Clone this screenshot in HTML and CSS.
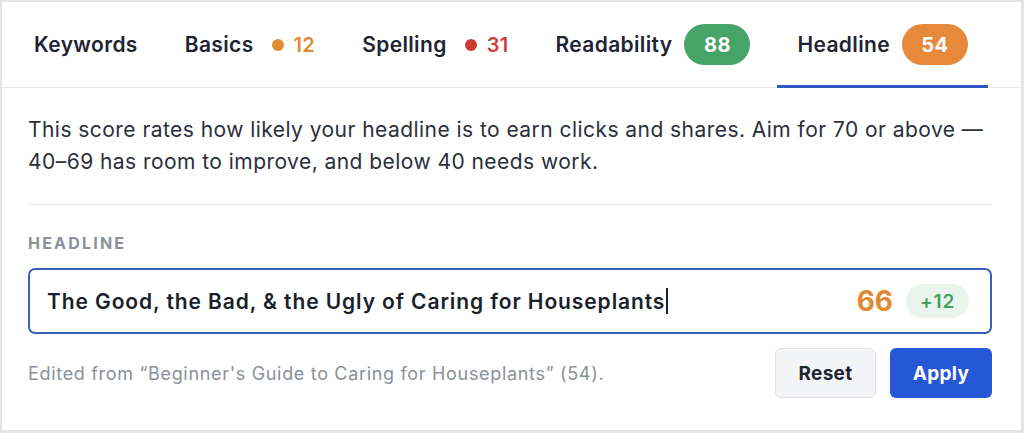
FILE: index.html
```html
<!DOCTYPE html>
<html lang="en">
<head>
    <meta charset="UTF-8">
    <meta name="viewport" content="width=device-width, initial-scale=1.0">
    <title>Headline Score</title>
    <link rel="stylesheet" href="styles.css">
</head>
<body>
    <div class="card">
        <nav class="tabs">
            <div class="tab">Keywords</div>
            <div class="tab">Basics <span class="dot dot-orange"></span><span class="count count-orange">12</span></div>
            <div class="tab">Spelling <span class="dot dot-red"></span><span class="count count-red">31</span></div>
            <div class="tab">Readability <span class="pill pill-green">88</span></div>
            <div class="tab active">Headline <span class="pill pill-orange">54</span></div>
        </nav>

        <div class="panel">
            <p class="intro">This score rates how likely your headline is to earn clicks and shares. Aim for 70 or above — 40–69 has room to improve, and below 40 needs work.</p>
            <hr class="divider">

            <div class="field-label">HEADLINE</div>
            <div class="headline-box">
                <span class="headline-text">The Good, the Bad, &amp; the Ugly of Caring for Houseplants</span><span class="caret"></span>
                <span class="score">66</span>
                <span class="delta">+12</span>
            </div>

            <div class="footer-row">
                <p class="origin">Edited from “Beginner's Guide to Caring for Houseplants” (54).</p>
                <div class="actions">
                    <button class="btn btn-reset">Reset</button>
                    <button class="btn btn-apply">Apply</button>
                </div>
            </div>
        </div>
    </div>
</body>
</html>
```

FILE: styles.css
```css
* {
    box-sizing: border-box;
}
body {
    margin: 0;
    font-family: Inter, "Noto Sans", sans-serif;
    background: #e6e6e6;
    color: #1f2433;
}
.card {
    width: 1024px;
    height: 433px;
    background: white;
    border: 2px solid #e4e4e4;
    border-right-width: 3px;
    border-bottom-width: 3px;
}
.tabs {
    display: flex;
    gap: 7px;
    height: 86px;
    padding-left: 12px;
    border-bottom: 1px solid #e8e8ea;
}
.tab {
    display: flex;
    align-items: center;
    height: 86px;
    padding: 2px 20px 0;
    margin-bottom: -1px;
    border-bottom: 3px solid transparent;
    font-size: 21px;
    font-weight: 600;
    letter-spacing: 0.35px;
    color: #1f2433;
}
.tab.active {
    border-bottom-color: #2f58c4;
}
.dot {
    width: 12px;
    height: 12px;
    border-radius: 50%;
    margin-left: 18px;
}
.dot-orange {
    background: #e08a34;
}
.dot-red {
    background: #cc3b33;
}
.count {
    margin-left: 10px;
    font-size: 20px;
    font-weight: 600;
}
.count-orange {
    color: #df8a36;
}
.count-red {
    color: #c9403a;
}
.pill {
    display: inline-flex;
    align-items: center;
    justify-content: center;
    width: 66px;
    height: 41px;
    margin-left: 12px;
    border-radius: 21px;
    color: white;
    font-size: 20px;
    font-weight: 700;
    letter-spacing: 0.5px;
}
.pill-green {
    background: #47a468;
}
.pill-orange {
    background: #e6893a;
}
.panel {
    padding: 26px 29px 0 26px;
}
.intro {
    margin: 0;
    font-size: 21px;
    line-height: 32px;
    letter-spacing: 0.45px;
    color: #2a2f3b;
}
.divider {
    margin: 26px 0 0;
    border: none;
    border-top: 1px solid #e6e6e8;
}
.field-label {
    margin-top: 28px;
    font-size: 16px;
    line-height: 20px;
    font-weight: 700;
    letter-spacing: 2.2px;
    color: #8b9099;
}
.headline-box {
    display: flex;
    align-items: center;
    height: 66px;
    margin-top: 15px;
    padding: 0 21px 0 17px;
    border: 2px solid #3a62b2;
    border-radius: 7px;
}
.headline-text {
    font-size: 21px;
    font-weight: 600;
    letter-spacing: 0.9px;
    color: #1a1f2c;
}
.caret {
    width: 1.5px;
    height: 26px;
    margin-left: 1px;
    background: #1a1f2c;
}
.score {
    margin-left: auto;
    font-size: 28px;
    font-weight: 700;
    color: #e08a34;
}
.delta {
    display: inline-flex;
    align-items: center;
    justify-content: center;
    width: 63px;
    height: 34px;
    margin-left: 13px;
    border-radius: 17px;
    background: #e9f4ec;
    color: #43a060;
    font-size: 19px;
    font-weight: 600;
    letter-spacing: 0.8px;
}
.footer-row {
    display: flex;
    align-items: center;
    justify-content: space-between;
    margin-top: 14px;
}
.origin {
    margin: 0;
    font-size: 18px;
    letter-spacing: 0.68px;
    color: #8b9099;
}
.actions {
    display: flex;
    gap: 14px;
}
.btn {
    height: 50px;
    width: 101px;
    border-radius: 6px;
    font-family: Inter, "Noto Sans", sans-serif;
    font-size: 19px;
    font-weight: 700;
    letter-spacing: 0.3px;
    cursor: pointer;
}
.btn-reset {
    background: #f3f4f6;
    border: 1px solid #e2e4e8;
    color: #1f2433;
}
.btn-apply {
    width: 102px;
    background: #2557d6;
    border: none;
    color: white;
}
```
